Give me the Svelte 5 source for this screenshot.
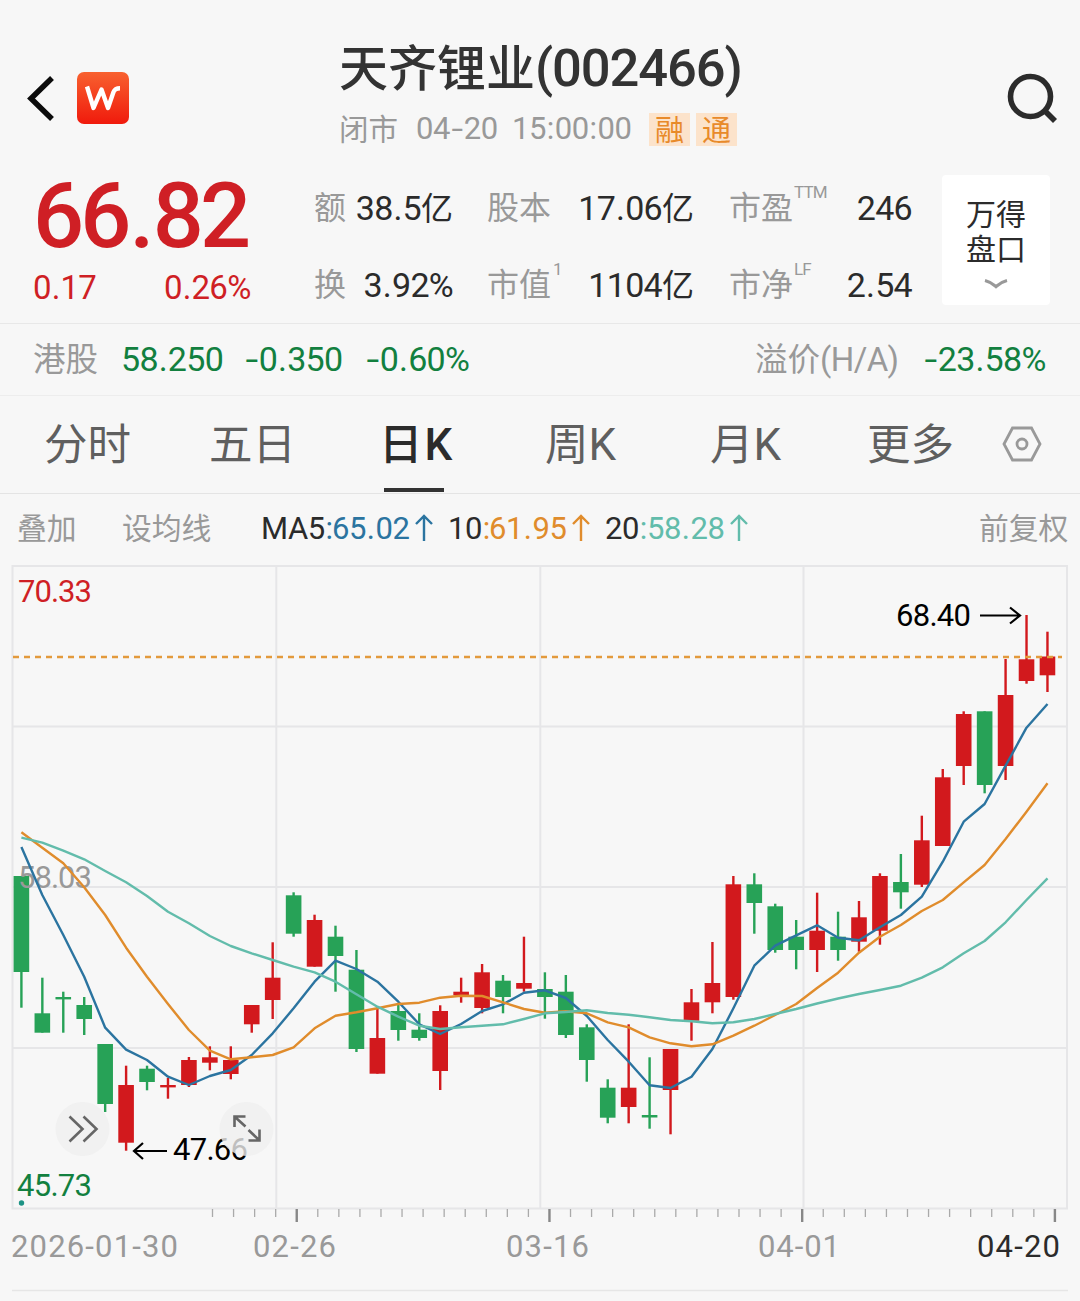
<script>
  const stats = [
    [
      { label: '额', value: '38.5', unit: '亿' },
      { label: '股本', value: '17.06', unit: '亿' },
      { label: '市盈', sup: 'TTM', value: '246' }
    ],
    [
      { label: '换', value: '3.92%' },
      { label: '市值', sup: '1', value: '1104', unit: '亿' },
      { label: '市净', sup: 'LF', value: '2.54' }
    ]
  ];

  const tabs = [
    { cjk: '分时', k: '' },
    { cjk: '五日', k: '' },
    { cjk: '日', k: 'K', active: true },
    { cjk: '周', k: 'K' },
    { cjk: '月', k: 'K' },
    { cjk: '更多', k: '' }
  ];

  // direction, body top, body bottom, wick top, wick bottom
  const candles = [
    ['g', 876, 972, 876, 1007.7], ['g', 1013.3, 1032.7, 977.7, 1032.7], ['g', 997, 999.4, 991.7, 1032.7],
    ['g', 1005, 1019, 997, 1035], ['g', 1044, 1104, 1044, 1112], ['r', 1085, 1142.7, 1065.7, 1150.7],
    ['g', 1068.7, 1082, 1065.7, 1090.3], ['r', 1085, 1087.4, 1078, 1098.7], ['r', 1060, 1085, 1057, 1087],
    ['r', 1057.3, 1062.7, 1046.3, 1070.3], ['r', 1060, 1074, 1046.3, 1079.3], ['r', 1005, 1024.3, 1005, 1032.7],
    ['r', 977.7, 1000, 942.3, 1019], ['g', 895.3, 933.7, 892.3, 936.7], ['r', 920, 966.7, 914.7, 966.7],
    ['g', 936.7, 956, 925.7, 991.7], ['g', 969.7, 1049, 950, 1052], ['r', 1038, 1073.7, 1006.7, 1073.7],
    ['g', 1011, 1030, 1003, 1040.7], ['g', 1029.7, 1038, 1013.3, 1040.7], ['r', 1011, 1071, 1005.3, 1090],
    ['r', 991.7, 995.2, 977.7, 1002.7], ['r', 972.3, 1008, 964, 1013.3], ['g', 980.7, 997, 975, 1013.3],
    ['r', 983, 988.7, 936.7, 991.7], ['g', 989, 997, 972.3, 1018.7], ['g', 991.7, 1035, 975, 1038],
    ['g', 1027.3, 1060, 1024.3, 1081.7], ['g', 1087.7, 1117.7, 1079.3, 1123.3], ['r', 1087.7, 1107, 1024.3, 1123.3],
    ['g', 1115, 1117.5, 1057.3, 1128.7], ['r', 1049, 1090, 1049, 1134.3], ['r', 1002.3, 1020.7, 989, 1040.7],
    ['r', 983, 1002.3, 942, 1013.3], ['r', 884.3, 997, 876, 999.7], ['g', 884.3, 903, 873.3, 933.7],
    ['g', 906.3, 950, 903.7, 952.7], ['g', 936.7, 950, 920, 969.3], ['r', 930.7, 950, 892.7, 972],
    ['g', 936.7, 950, 911.7, 960.7], ['r', 917.3, 941.7, 901, 951.7], ['r', 876, 930.7, 873.3, 944.7],
    ['g', 882, 892.3, 854, 908.7], ['r', 840.3, 884.7, 815.7, 887], ['r', 777.3, 846, 769, 846],
    ['r', 714, 766, 711.3, 785], ['g', 711.3, 785, 711.3, 793.3], ['r', 695, 766, 659, 780],
    ['r', 659.3, 681, 615, 683.7], ['r', 656.5, 675.3, 631.7, 692]
  ];

  const ma5 = [847, 895, 935, 976.7, 1027.7, 1049.7, 1060, 1076.7, 1085, 1076, 1070, 1055, 1033.3, 1008.3, 981.7, 960.7, 969, 981.7, 1001.7, 1024.3, 1034, 1024, 1011, 1004.3, 992.7, 990.3, 998, 1016, 1040, 1061.7, 1085.3, 1088, 1076.7, 1049, 1008.3, 965.7, 945.7, 935.3, 925.3, 937.7, 940.3, 927.3, 915, 896.7, 861.7, 821.7, 804, 765.7, 727.7, 704];
  const ma10 = [832.3, 847.7, 863.3, 887.3, 915, 947.7, 976.7, 1004, 1030, 1050.7, 1059.3, 1057.3, 1055, 1047.3, 1028.3, 1015.7, 1012.3, 1008.3, 1004, 1002.7, 997.7, 995.7, 996, 1002.3, 1009, 1012.7, 1011.3, 1013.3, 1022.3, 1027.3, 1037.3, 1043.3, 1046.3, 1044.3, 1035.7, 1025.7, 1015, 1004, 988, 972.7, 952.7, 936.7, 925, 911, 900, 882.3, 865, 839, 811.7, 783.3];
  const ma20 = [837.7, 842.7, 850.7, 859.3, 871, 882.3, 896, 911.7, 923.3, 936, 946, 953.3, 960, 966.7, 972.3, 981.7, 994.3, 1006.7, 1016.7, 1025.7, 1029, 1027.3, 1025.7, 1024.3, 1019, 1013.3, 1012, 1010.3, 1013, 1014.7, 1017.3, 1020, 1021.3, 1023.3, 1022.3, 1019, 1014, 1009, 1003.5, 998.5, 994, 990, 985.7, 977.7, 967.3, 953.3, 941, 922.3, 900, 878.3];

  const cx = (i) => 21.4 + i * 20.94;
  const line = (values) => values.map((y, i) => `${cx(i).toFixed(1)},${y}`).join(' ');
  const ticks = Array.from({ length: 41 }, (_, i) => ({ x: 212.5 + i * 21.06, major: i % 12 === 4 }));

  const dates = [
    { x: 11, w: 167, text: '2026-01-30' },
    { x: 253, w: 83, text: '02-26' },
    { x: 506, w: 83, text: '03-16' },
    { x: 758, w: 82, text: '04-01' },
    { x: 977, w: 83, text: '04-20', dark: true }
  ];
</script>

{#snippet num(text)}{#each text.split('') as ch}{#if ch === '-'}<i class="dash">-</i>{:else if ch === '.' || ch === ':'}<i class="dot">{ch}</i>{:else}{ch}{/if}{/each}{/snippet}

{#snippet up()}
  <svg class="up" viewBox="0 0 20 28"><path d="M10 27V2M2 10l8-8 8 8" /></svg>
{/snippet}

<main>
  <header>
    <svg class="back" viewBox="0 0 30 48"><path d="M26 4L5 24.5L26 45" /></svg>
    <div class="logo">
      <svg viewBox="0 0 52 52"><path d="M10 14.500L16.500 36L24.500 17.500L31 36L36.500 20Q38 16.200 43 16.200" /></svg>
    </div>
    <div class="heading">
      <h1>天齐锂业<b>{@render num('(002466)')}</b></h1>
      <div class="session">
        <span class="cjk">闭市</span>
        <span>{@render num('04-20')}</span>
        <span>{@render num('15:00:00')}</span>
        <em>融</em>
        <em>通</em>
      </div>
    </div>
    <svg class="search" viewBox="0 0 54 54"><circle cx="24.500" cy="23.500" r="20" /><path d="M39 38l10 10" /></svg>
  </header>

  <section class="quote">
    <div class="price">
      <strong>{@render num('66.82')}</strong>
      <div class="change"><span>{@render num('0.17')}</span><span>{@render num('0.26%')}</span></div>
    </div>
    <div class="stats">
      {#each stats as row}
        <div class="stat-row">
          {#each row as s}
            <span class="label">{s.label}{#if s.sup}<sup>{s.sup}</sup>{/if}</span>
            <span class="value">{@render num(s.value)}{#if s.unit}<span class="unit">{s.unit}</span>{/if}</span>
          {/each}
        </div>
      {/each}
    </div>
    <div class="panel">
      <span>万得</span>
      <span>盘口</span>
      <svg viewBox="0 0 26 12"><path d="M2 2.500Q8 4 13 8.500Q18 4 24 2.500" /></svg>
    </div>
  </section>

  <section class="hk">
    <span class="cjk">港股</span>
    <span class="green">{@render num('58.250')}</span>
    <span class="green">{@render num('-0.350')}</span>
    <span class="green">{@render num('-0.60%')}</span>
    <span class="cjk">溢价<span class="ha">(H/A)</span></span>
    <span class="green">{@render num('-23.58%')}</span>
  </section>

  <nav>
    {#each tabs as t}
      <span class="tab" class:active={t.active}>{t.cjk}{#if t.k}<b>{t.k}</b>{/if}</span>
    {/each}
    <svg class="hex" viewBox="0 0 40 36"><path d="M10.500 2h19L38 18l-8.500 16h-19L2 18z" /><circle cx="20" cy="18" r="5" /></svg>
  </nav>

  <section class="legend">
    <span class="cjk">叠加</span>
    <span class="cjk">设均线</span>
    <span>MA5<i class="blue dot">:</i></span>
    <span class="blue">{@render num('65.02')}{@render up()}</span>
    <span>10<i class="orange dot">:</i></span>
    <span class="orange">{@render num('61.95')}{@render up()}</span>
    <span>20<i class="teal dot">:</i></span>
    <span class="teal">{@render num('58.28')}{@render up()}</span>
    <span class="cjk">前复权</span>
  </section>

  <svg class="chart" viewBox="0 560 1080 741">
    <g class="grid">
      <path d="M12.500 566H1067V1208.500H12.500Z" />
      <path d="M12 726.500H1067M12 887H1067M12 1048H1067M276.300 566V1208M540.300 566V1208M803.500 566V1208" />
    </g>

    {#each candles as [dir, top, bottom, high, low], i}
      <g class={dir}>
        <rect x={cx(i) - 1.2} y={high} width="2.400" height={low - high} />
        <rect x={cx(i) - 7.8} y={top} width="15.600" height={bottom - top} />
      </g>
    {/each}

    <text class="mid" x="18" y="888" textLength="74">58.03</text>
    <polyline class="ma blue" points={line(ma5)} />
    <polyline class="ma orange" points={line(ma10)} />
    <polyline class="ma teal" points={line(ma20)} />
    <path class="last" d="M13 657H1062" />

    <text class="high" x="18" y="601.500" textLength="74">70.33</text>
    <text class="low" x="17" y="1196" textLength="75">45.73</text>
    <circle class="point" cx="21.500" cy="1203" r="2.700" />

    <text class="mark" x="896" y="626" textLength="75">68.40</text>
    <path class="arrow" d="M980 615.500H1019M1010 607.500l10 8l-10 8" />
    <text class="mark" x="173" y="1160" textLength="75">47.66</text>
    <path class="arrow" d="M167 1151H134M143 1143l-9 8l9 8" />

    <circle class="button" cx="82.500" cy="1129" r="27" />
    <path class="glyph" d="M69.500 1116.500l13 12.500l-13 12.500M83.500 1116.500l13 12.500l-13 12.500" />
    <circle class="button" cx="246.500" cy="1129" r="27" />
    <path class="glyph" d="M234.500 1127v-10.500h11M235 1117l10.500 9.500M259.500 1129.500v11h-11M259 1140l-10.500-10" />

    {#each ticks as t}
      <path class="tick" class:major={t.major} d={`M${t.x} 1209v${t.major ? 13 : 8}`} />
    {/each}
    {#each dates as d}
      <text class="date" class:dark={d.dark} x={d.x} y="1256.500" textLength={d.w}>{d.text}</text>
    {/each}
    <path class="rule" d="M12 1290.500H1068" />
  </svg>
</main>

<style>
  :global(body) {
    background: #f7f7f7;
  }

  main {
    width: 1080px;
    height: 1301px;
    overflow: hidden;
    background: #f7f7f7;
    color: #2b2b2b;
    font-family: Roboto, 'Noto Sans CJK SC', sans-serif;
    letter-spacing: -0.4px;
  }

  svg {
    display: block;
    fill: none;
  }

  i {
    font-style: normal;
  }

  .dash {
    display: inline-block;
    transform: scaleX(1.35);
    margin: 0 0.1em 0 0.08em;
  }

  .dot {
    padding: 0 0.025em;
  }

  .cjk {
    font-family: 'Noto Sans CJK SC', sans-serif;
    letter-spacing: 0;
    color: #999;
  }

  .green { color: #12803f; }
  .blue { color: #2b74a0; }
  .orange { color: #e08c2c; }
  .teal { color: #62bcab; }

  header {
    display: grid;
    grid-template-columns: 50px 262px 1fr 54px;
    padding: 0 20px 0 27px;
    height: 170px;
    align-items: start;
  }

  .back {
    width: 30px;
    height: 48px;
    margin-top: 74px;
    margin-left: -1px;
    stroke: #0c0c0c;
    stroke-width: 5.5;
  }

  .logo {
    width: 52px;
    height: 52px;
    margin-top: 72px;
    border-radius: 7px;
    background: linear-gradient(#f8612f, #f01a0c);
  }

  .logo svg {
    stroke: #fff;
    stroke-width: 4.4;
    stroke-linejoin: round;
  }

  .search {
    width: 54px;
    height: 54px;
    margin-top: 73px;
    stroke: #2b2b2b;
    stroke-width: 5.6;
  }

  .heading {
    padding-top: 27px;
  }

  h1 {
    margin: 0;
    height: 78px;
    font: 500 49px/75px 'Noto Sans CJK SC', sans-serif;
    letter-spacing: 0;
    white-space: nowrap;
    color: #333;
  }

  h1 b {
    font: 500 52.5px/75px Roboto, sans-serif;
    letter-spacing: -1.1px;
  }

  .session {
    display: grid;
    grid-template-columns: 77px 96px 137px 47px 41px;
    align-items: center;
    height: 48px;
    font-size: 31px;
    line-height: 48px;
    color: #999;
  }

  .session .cjk {
    font-size: 29.5px;
    line-height: 44px;
    height: 48px;
  }

  .session em {
    width: 41px;
    height: 33px;
    text-align: center;
    font: normal 29px/31px 'Noto Sans CJK SC', sans-serif;
    letter-spacing: 0;
    color: #e88a2a;
    background: #fce3cb;
  }

  .quote {
    display: grid;
    grid-template-columns: 281px 628px 108px;
    height: 153px;
    padding-left: 33px;
    border-bottom: 1px solid #e8e8e8;
  }

  .price {
    color: #cf1f25;
  }

  .price strong {
    display: block;
    height: 96px;
    line-height: 93px;
    font-size: 90px;
    font-weight: 500;
    letter-spacing: -4px;
  }

  .change {
    display: grid;
    grid-template-columns: 131px 1fr;
    font-size: 33px;
    line-height: 44px;
    letter-spacing: -0.7px;
  }

  .stats {
    padding-top: 1px;
  }

  .stat-row {
    display: grid;
    grid-template-columns: 34px 105px 98px 143px 100px 118px;
    height: 76.5px;
    align-items: baseline;
    font-size: 34px;
    line-height: 70px;
    letter-spacing: -0.7px;
  }

  .label {
    position: relative;
    font: 32px/70px 'Noto Sans CJK SC', sans-serif;
    letter-spacing: 0;
    color: #999;
    white-space: nowrap;
    transform: translateY(-1px);
  }

  .label:nth-child(3) {
    padding-left: 34px;
  }

  .label:nth-child(5) {
    padding-left: 35px;
  }

  .label sup {
    position: absolute;
    left: 100px;
    top: 12px;
    font: 17px/20px Roboto, sans-serif;
    letter-spacing: -0.8px;
  }

  .value {
    text-align: right;
    white-space: nowrap;
  }

  .unit {
    font: 32px/1 'Noto Sans CJK SC', sans-serif;
    letter-spacing: 0;
  }

  .panel {
    display: flex;
    flex-direction: column;
    align-items: center;
    height: 130px;
    margin-top: 5px;
    padding-top: 20px;
    box-sizing: border-box;
    border-radius: 4px;
    background: #fff;
    font: 30px/35px 'Noto Sans CJK SC', sans-serif;
    letter-spacing: 0;
  }

  .panel svg {
    width: 26px;
    height: 12px;
    margin-top: 13px;
    stroke: #999;
    stroke-width: 3.2;
  }

  .hk {
    display: grid;
    grid-template-columns: 88px 123px 121px 390px 168px auto;
    align-items: baseline;
    height: 71px;
    padding-left: 33px;
    border-bottom: 1px solid #ededed;
    font-size: 34px;
    line-height: 66px;
    letter-spacing: -0.7px;
    white-space: nowrap;
  }

  .hk .cjk {
    font-size: 32.5px;
  }

  .ha {
    font: 33px/1 Roboto, sans-serif;
    letter-spacing: -0.6px;
  }

  nav {
    display: grid;
    grid-template-columns: 165px 173px 163px 165px 157px 135px 40px;
    height: 97px;
    padding-left: 44px;
    border-bottom: 1px solid #e4e4e4;
  }

  .tab {
    position: relative;
    height: 97px;
    font: 43.5px/92px 'Noto Sans CJK SC', sans-serif;
    letter-spacing: 0;
    color: #5f5f5f;
    white-space: nowrap;
  }

  .tab b {
    font: 44px/1 Roboto, sans-serif;
  }

  .tab.active {
    text-indent: -3px;
  }

  .tab.active,
  .tab.active b {
    font-weight: 500;
    color: #2b2b2b;
  }

  .tab.active b {
    margin-left: 2px;
  }

  .tab.active::after {
    content: '';
    position: absolute;
    left: 2px;
    bottom: 1px;
    width: 60px;
    height: 4px;
    background: #333;
  }

  .hex {
    width: 40px;
    height: 36px;
    margin-top: 30px;
    stroke: #999;
    stroke-width: 2.8;
  }

  .legend {
    display: grid;
    grid-template-columns: 105px 139px 71px 116px 41px 116px 42px 332px auto;
    height: 66px;
    padding-left: 17px;
    align-items: baseline;
    font-size: 31px;
    line-height: 65px;
    white-space: nowrap;
  }

  .legend .cjk {
    font-size: 29.8px;
  }

  .up {
    display: inline-block;
    width: 20px;
    height: 28px;
    margin-left: 5px;
    vertical-align: -3px;
    stroke: currentColor;
    stroke-width: 2.4;
  }

  .chart {
    width: 1080px;
    height: 741px;
    font-size: 31px;
    letter-spacing: 0;
  }

  .grid { stroke: #e6e6e8; stroke-width: 2; }
  .g { fill: #27a257; }
  .r { fill: #d2191d; }
  .ma { stroke: currentColor; stroke-width: 2.4; stroke-linejoin: round; }
  .last { stroke: #e39a3c; stroke-width: 2.4; stroke-dasharray: 6 5; }
  .mid { fill: #999; }
  .high { fill: #cf1f25; }
  .low { fill: #12803f; }
  .point { fill: #1d9385; }
  .mark { fill: #000; }
  .arrow { stroke: #000; stroke-width: 2.2; }
  .button { fill: #efefef; fill-opacity: 0.8; }
  .glyph { stroke: #666; stroke-width: 2.6; }
  .tick { stroke: #aaa; stroke-width: 1.3; }
  .tick.major { stroke: #888; stroke-width: 2.4; }
  .date { fill: #999; }
  .date.dark { fill: #2b2b2b; }
  .rule { stroke: #e6e6e6; stroke-width: 1.5; }
</style>
